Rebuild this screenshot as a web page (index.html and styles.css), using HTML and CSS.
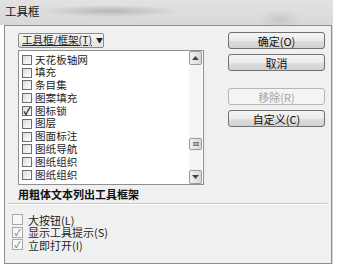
FILE: index.html
```html
<!DOCTYPE html>
<html lang="zh-CN">
<head>
    <meta charset="UTF-8">
    <title>工具框</title>
    <link rel="stylesheet" href="styles.css">
</head>
<body>
    <div class="window">
        <div class="titlebar">工具框</div>
        <div class="dialog">
            <div class="top">
                <div class="left-col">
                    <div class="combo"><span class="combo-text">工具框/框架(T)</span><span class="combo-arrow">▼</span></div>
                    <div class="listbox">
                        <div class="items">
                            <div class="item"><span class="box"></span>天花板轴网</div>
                            <div class="item"><span class="box"></span>填充</div>
                            <div class="item"><span class="box"></span>条目集</div>
                            <div class="item"><span class="box"></span>图案填充</div>
                            <div class="item"><span class="box checked">✓</span>图标锁</div>
                            <div class="item"><span class="box"></span>图层</div>
                            <div class="item"><span class="box"></span>图面标注</div>
                            <div class="item"><span class="box"></span>图纸导航</div>
                            <div class="item"><span class="box"></span>图纸组织</div>
                            <div class="item"><span class="box"></span>图纸组织</div>
                        </div>
                        <div class="scrollbar">
                            <div class="sb-btn">
                                <svg width="7" height="4" viewBox="0 0 7 4"><path d="M0 4 L3.5 0 L7 4 Z" fill="#444"/></svg>
                            </div>
                            <div class="sb-track">
                                <div class="sb-thumb">
                                    <svg width="6" height="6" viewBox="0 0 6 6"><path d="M0 1.5H6M0 3H6M0 4.5H6" stroke="#777" stroke-width="1"/></svg>
                                </div>
                            </div>
                            <div class="sb-btn">
                                <svg width="7" height="4" viewBox="0 0 7 4"><path d="M0 0 L3.5 4 L7 0 Z" fill="#444"/></svg>
                            </div>
                        </div>
                    </div>
                    <div class="bold-label">用粗体文本列出工具框架</div>
                </div>
                <div class="buttons">
                    <button class="btn">确定(O)</button>
                    <button class="btn">取消</button>
                    <button class="btn disabled">移除(R)</button>
                    <button class="btn">自定义(C)</button>
                </div>
            </div>
            <div class="separator"></div>
            <div class="options">
                <div class="option"><span class="flat-box"></span>大按钮(L)</div>
                <div class="option"><span class="flat-box">✓</span>显示工具提示(S)</div>
                <div class="option"><span class="flat-box">✓</span>立即打开(I)</div>
            </div>
        </div>
    </div>
</body>
</html>
```

FILE: styles.css
```css
body {
    margin: 0;
    background-color: #ffffff;
    font-family: "Noto Sans CJK SC", "DejaVu Sans", sans-serif;
    font-size: 11px;
    color: #1e1e1e;
}

.window {
    width: 333px;
}

.titlebar {
    height: 25px;
    padding-left: 5px;
    line-height: 23px;
    font-size: 11.5px;
    color: #111;
    background:
        radial-gradient(ellipse 70px 6px at 110px 11px, rgba(150, 150, 150, 0.55), rgba(150, 150, 150, 0)),
        radial-gradient(ellipse 20px 10px at 280px 20px, rgba(180, 180, 180, 0.5), rgba(180, 180, 180, 0)),
        linear-gradient(to bottom, #e2e2e2, #d8d8d8);
    box-sizing: border-box;
}

.dialog {
    margin-left: 4px;
    width: 328px;
    height: 239px;
    box-sizing: border-box;
    border: 1px solid #8e8e8e;
    background-color: #f0f0f0;
    box-shadow: 1px 1px 0 #d4d4d4;
}

.top {
    display: flex;
    padding: 5px 0 0 13px;
}

.left-col {
    width: 186px;
}

.combo {
    display: inline-flex;
    align-items: center;
    height: 13px;
    width: 81px;
    padding-left: 3px;
    border: 1px solid #8a8a8a;
    border-radius: 2px;
    background: linear-gradient(to bottom, #f6f6f6, #e2e2e2);
    font-size: 10.5px;
    line-height: 12px;
    white-space: nowrap;
}

.combo-text {
    text-decoration: underline;
}

.combo-arrow {
    margin-left: 4px;
    font-size: 7px;
}

.listbox {
    display: flex;
    margin-top: 2px;
    height: 135px;
    box-sizing: border-box;
    border: 1px solid #8f8f8f;
    background-color: #ffffff;
}

.items {
    flex: 1;
    padding: 3px 0 0 3px;
}

.item {
    display: flex;
    align-items: center;
    height: 12.8px;
    line-height: 12.8px;
    font-size: 10.6px;
}

.box {
    width: 8px;
    height: 8px;
    margin-right: 3px;
    border: 1px solid #6e6e6e;
    background: linear-gradient(135deg, #dcdcdc, #ffffff);
    font-size: 10px;
    line-height: 8px;
    text-align: center;
    font-weight: bold;
    color: #111;
}

.scrollbar {
    display: flex;
    flex-direction: column;
    width: 13px;
    margin-right: 1px;
    background-color: #f4f4f4;
}

.sb-btn {
    display: flex;
    align-items: center;
    justify-content: center;
    height: 14px;
    box-sizing: border-box;
    border: 1px solid #9a9a9a;
    border-radius: 2px;
    background: linear-gradient(to right, #f2f2f2, #d8d8d8);
}

.sb-track {
    flex: 1;
}

.sb-thumb {
    display: flex;
    align-items: center;
    justify-content: center;
    margin-top: 73px;
    height: 12px;
    box-sizing: border-box;
    border: 1px solid #9a9a9a;
    border-radius: 2px;
    background: linear-gradient(to right, #f2f2f2, #d8d8d8);
}

.bold-label {
    margin-top: 2px;
    font-weight: bold;
    font-size: 11px;
    line-height: 14px;
    color: #111;
}

.buttons {
    display: flex;
    flex-direction: column;
    margin-left: 24px;
    padding-top: 1px;
    width: 97px;
}

.btn {
    height: 17px;
    margin-bottom: 5px;
    padding: 0;
    border: 1px solid #707070;
    border-radius: 3px;
    background: linear-gradient(to bottom, #f4f4f4, #ebebeb 50%, #dddddd 51%, #d2d2d2);
    font-family: "Noto Sans CJK SC", "DejaVu Sans", sans-serif;
    font-size: 11px;
    line-height: 14px;
    color: #111;
}

.btn:nth-child(3) {
    margin-top: 12px;
}

.btn.disabled {
    border-color: #b5b5b5;
    background: #f4f4f4;
    color: #a3a3a3;
}

.separator {
    margin: 2px 4px 0 3px;
    border-top: 1px solid #c8c8c8;
    border-bottom: 1px solid #ffffff;
}

.options {
    padding: 9px 0 0 7px;
}

.option {
    display: flex;
    align-items: center;
    height: 12.5px;
    font-size: 11px;
    line-height: 12.5px;
}

.flat-box {
    width: 9px;
    height: 9px;
    margin-right: 5px;
    border: 1px solid #a8a8a8;
    background-color: #f7f7f7;
    font-size: 9px;
    line-height: 9px;
    text-align: center;
    color: #6a6a6a;
}
```
